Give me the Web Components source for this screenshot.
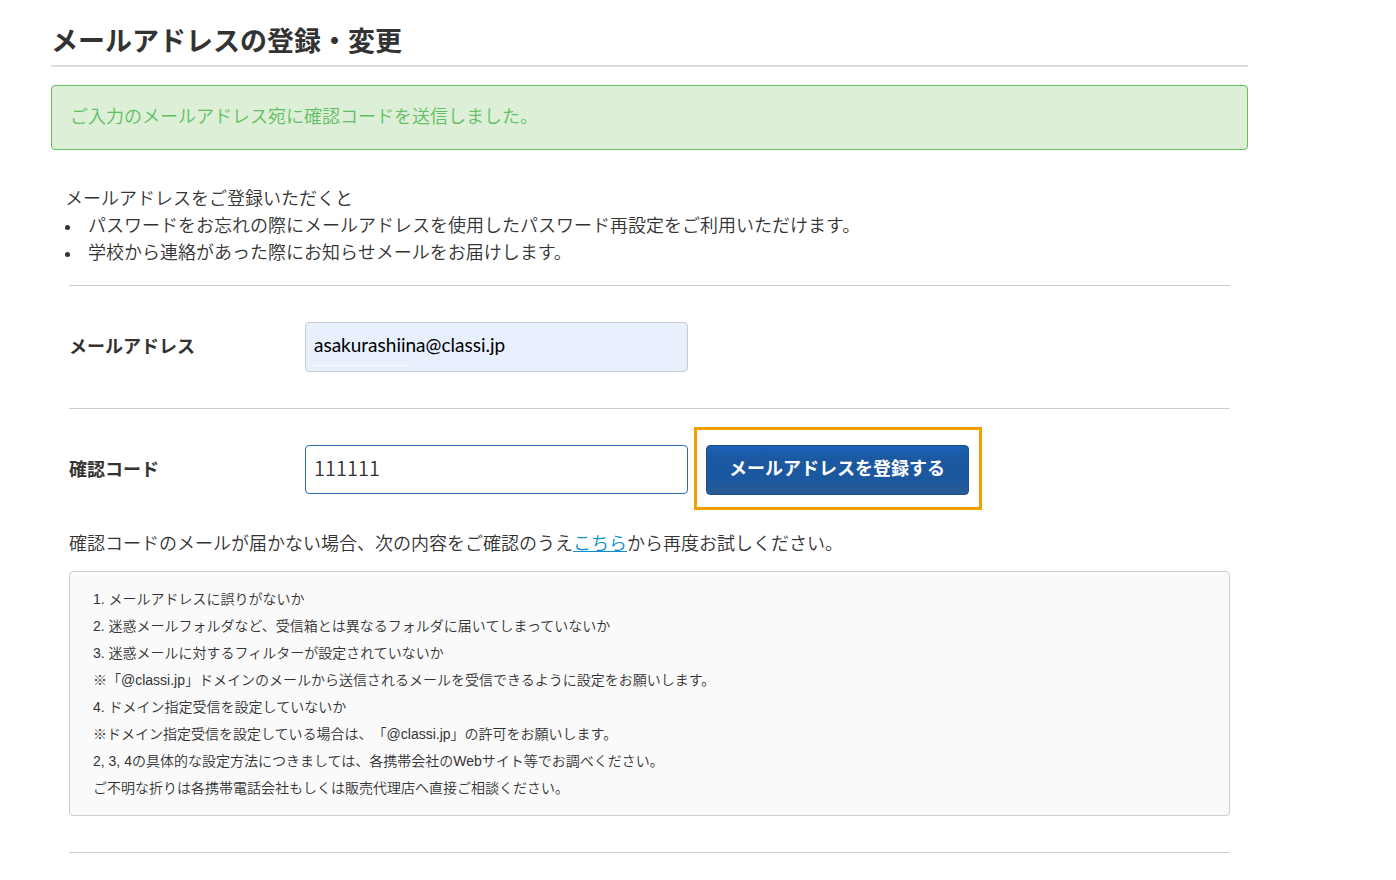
<!DOCTYPE html>
<html lang="ja">
<head>
<meta charset="utf-8">
<title>メールアドレスの登録・変更</title>
<style>
  body {
    margin: 0;
    background: #fff;
    color: #333;
    font-family: "Liberation Sans", "Noto Sans CJK JP", sans-serif;
    font-size: 18px;
    font-weight: 350;
    line-height: 27px;
    text-spacing-trim: space-all;
  }
  a {
    color: #0d8ecf;
  }
</style>
</head>
<body>
<settings-page heading="メールアドレスの登録・変更">
  <notice-box>ご入力のメールアドレス宛に確認コードを送信しました。</notice-box>
  <benefit-list lead="メールアドレスをご登録いただくと">
    <benefit-item>パスワードをお忘れの際にメールアドレスを使用したパスワード再設定をご利用いただけます。</benefit-item>
    <benefit-item>学校から連絡があった際にお知らせメールをお届けします。</benefit-item>
  </benefit-list>
  <form-section>
    <form-field label="メールアドレス" type="email" value="asakurashiina@classi.jp" filled></form-field>
  </form-section>
  <form-section>
    <form-field label="確認コード" type="text" value="111111">
      <highlight-frame>
        <submit-button>メールアドレスを登録する</submit-button>
      </highlight-frame>
    </form-field>
    <help-box>
      <span slot="lead">確認コードのメールが届かない場合、次の内容をご確認のうえ<a href="#resend">こちら</a>から再度お試しください。</span>
      <div>1. メールアドレスに誤りがないか</div>
      <div>2. 迷惑メールフォルダなど、受信箱とは異なるフォルダに届いてしまっていないか</div>
      <div>3. 迷惑メールに対するフィルターが設定されていないか</div>
      <div>※「@classi.jp」ドメインのメールから送信されるメールを受信できるように設定をお願いします。</div>
      <div>4. ドメイン指定受信を設定していないか</div>
      <div>※ドメイン指定受信を設定している場合は、「@classi.jp」の許可をお願いします。</div>
      <div>2, 3, 4の具体的な設定方法につきましては、各携帯会社のWebサイト等でお調べください。</div>
      <div>ご不明な折りは各携帯電話会社もしくは販売代理店へ直接ご相談ください。</div>
    </help-box>
  </form-section>
  <form-section last></form-section>
</settings-page>

<script>
class BaseElement extends HTMLElement {
  constructor() {
    super()
    const template = document.createElement('template')
    template.innerHTML = this.constructor.markup
    this.shadow = this.attachShadow({ mode: 'open' })
    this.shadow.appendChild(template.content.cloneNode(true))
  }
}

class SettingsPage extends BaseElement {
  static markup = `
    <style>
    :host {
      display: block;
      padding: 19px 148px 0 51px;
    }
    h1 {
      margin: 0 0 18px;
      border-bottom: 2px solid #ddd;
      font-size: 27px;
      font-weight: 700;
      line-height: 46px;
    }
    </style>
    <main>
      <h1></h1>
      <slot></slot>
    </main>
  `
  connectedCallback() {
    this.shadow.querySelector('h1').textContent = this.getAttribute('heading')
  }
}

class NoticeBox extends BaseElement {
  static markup = `
    <style>
    :host {
      display: block;
      padding: 18px;
      border: 1px solid #5dbf60;
      border-radius: 4px;
      background: #deefd8;
      color: #5dbf60;
    }
    </style>
    <slot></slot>
  `
}

class BenefitList extends BaseElement {
  static markup = `
    <style>
    :host {
      display: block;
      margin: 36px 14px 18px;
    }
    p {
      margin: 0;
    }
    </style>
    <p></p>
    <div role="list"><slot></slot></div>
  `
  connectedCallback() {
    this.shadow.querySelector('p').textContent = this.getAttribute('lead')
  }
}

class BenefitItem extends BaseElement {
  static markup = `
    <style>
    :host {
      display: flex;
      align-items: center;
      gap: 18px;
    }
    i {
      flex: none;
      width: 5px;
      height: 5px;
      margin-top: 2px;
      border-radius: 50%;
      background: #333;
    }
    </style>
    <i></i>
    <span role="listitem"><slot></slot></span>
  `
}

class FormSection extends BaseElement {
  static markup = `
    <style>
    :host {
      display: block;
      margin: 0 18px;
      padding: 36px 0;
      border-top: 1px solid #ccc;
    }
    :host([last]) {
      padding: 0;
    }
    </style>
    <slot></slot>
  `
}

class FormField extends BaseElement {
  static markup = `
    <style>
    :host {
      display: flex;
      align-items: center;
    }
    label {
      flex: none;
      width: 236px;
      font-weight: 700;
    }
    input {
      box-sizing: border-box;
      width: 383px;
      height: 49px;
      margin: 0 0 1px;
      padding: 0 8px 5px;
      border: 1px solid #2d6cb5;
      border-radius: 4px;
      outline: none;
      background: #fff;
      color: #333;
      font-family: "Noto Sans CJK JP", sans-serif;
      font-size: 20px;
      font-weight: 350;
    }
    /* autofilled look */
    :host([filled]) input {
      height: 50px;
      margin: 0;
      border-color: #c8cbd2;
      background: linear-gradient(#fff, #fff) 6px 42px / 96px 1px no-repeat #e8effd;
      color: #000;
      font-family: Lato, sans-serif;
      font-size: 19px;
      font-weight: 400;
    }
    </style>
    <label for="field"></label>
    <input id="field">
    <slot></slot>
  `
  connectedCallback() {
    const input = this.shadow.querySelector('input')
    this.shadow.querySelector('label').textContent = this.getAttribute('label')
    input.type = this.getAttribute('type')
    input.value = this.getAttribute('value')
  }
}

class HighlightFrame extends BaseElement {
  static markup = `
    <style>
    :host {
      display: block;
      margin: -18px 0 -15px 6px;
      padding: 15px 10px 12px 9px;
      border: 3px solid #f2a000;
    }
    </style>
    <slot></slot>
  `
}

class SubmitButton extends BaseElement {
  static markup = `
    <style>
    :host {
      display: block;
    }
    button {
      display: block;
      height: 50px;
      padding: 0 23px 2px 22px;
      border: 1px solid #1e4f87;
      border-radius: 4px;
      background: linear-gradient(#1a61b6, #1b589f 30%, #1b589f 70%, #2a5a92);
      color: #fff;
      font: inherit;
      font-weight: 700;
      white-space: nowrap;
    }
    </style>
    <button type="button"><slot></slot></button>
  `
}

class HelpBox extends BaseElement {
  static markup = `
    <style>
    :host {
      display: block;
      margin-top: 36px;
    }
    p {
      margin: 0 0 13px;
    }
    section {
      padding: 14px 23px 13px;
      border: 1px solid #ccc;
      border-radius: 4px;
      background: #fafafa;
      font-size: 14px;
    }
    </style>
    <p><slot name="lead"></slot></p>
    <section><slot></slot></section>
  `
}

customElements.define('settings-page', SettingsPage)
customElements.define('notice-box', NoticeBox)
customElements.define('benefit-list', BenefitList)
customElements.define('benefit-item', BenefitItem)
customElements.define('form-section', FormSection)
customElements.define('form-field', FormField)
customElements.define('highlight-frame', HighlightFrame)
customElements.define('submit-button', SubmitButton)
customElements.define('help-box', HelpBox)
</script>
</body>
</html>
